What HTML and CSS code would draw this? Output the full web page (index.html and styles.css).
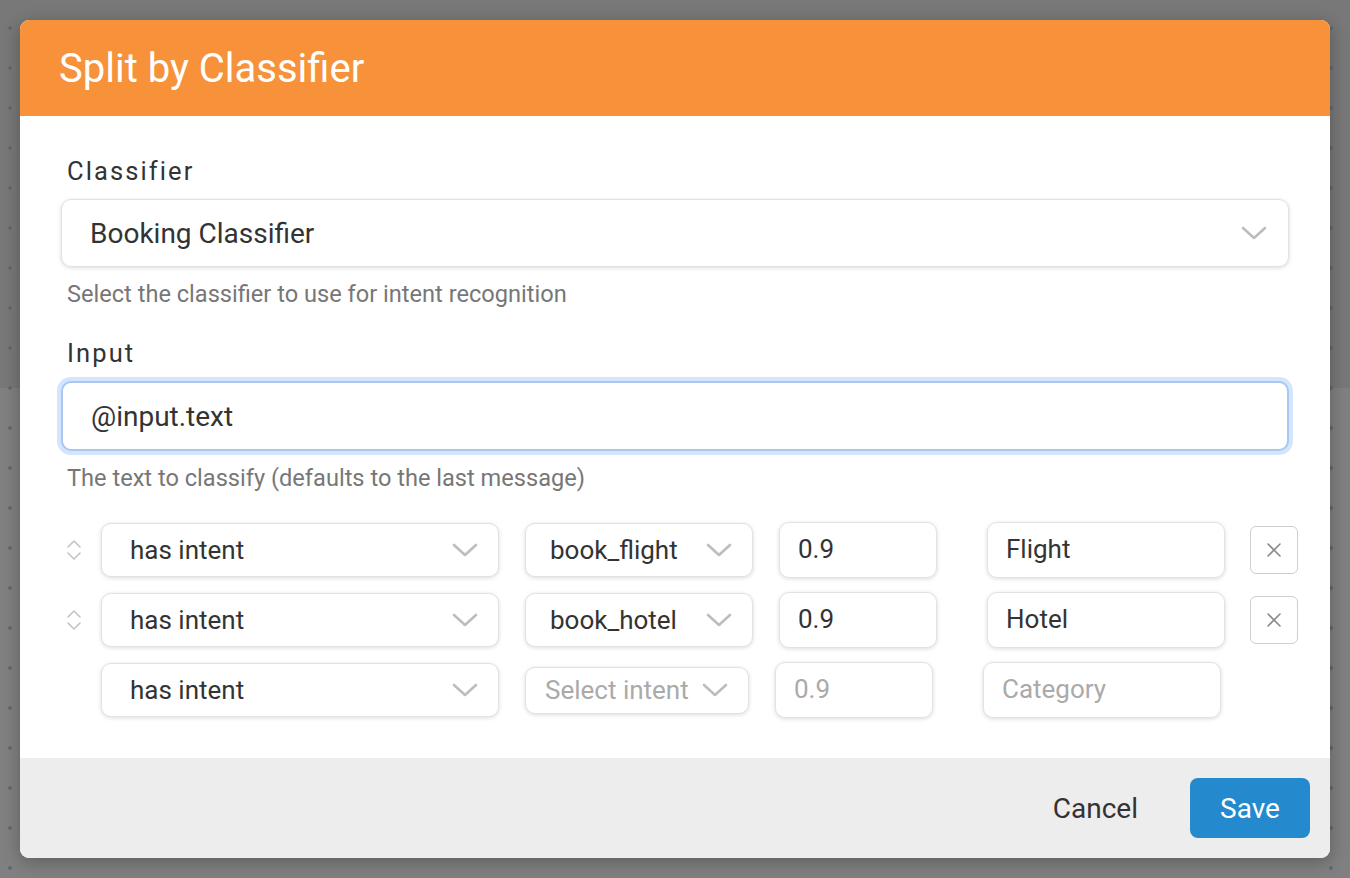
FILE: index.html
```html
<!DOCTYPE html>
<html lang="en">
<head>
<meta charset="utf-8">
<title>Split by Classifier</title>
<link rel="stylesheet" href="styles.css">
</head>
<body>
<div class="dialog">
  <div class="dialog-header">Split by Classifier</div>
  <div class="dialog-body">
    <div class="field">
      <div class="label">Classifier</div>
      <div class="select big">
        <span class="value">Booking Classifier</span>
        <svg class="chev" width="26" height="14" viewBox="0 0 26 14"><path d="M2 2 L13 12 L24 2" fill="none" stroke="#bdbdbd" stroke-width="2.6" stroke-linecap="round" stroke-linejoin="round"/></svg>
      </div>
      <div class="help">Select the classifier to use for intent recognition</div>
    </div>
    <div class="field">
      <div class="label">Input</div>
      <div class="input big focused"><span class="value">@input.text</span></div>
      <div class="help">The text to classify (defaults to the last message)</div>
    </div>

    <div class="rules">
      <div class="rule">
        <div class="handle"><svg width="16" height="22" viewBox="0 0 16 22"><path d="M2 8 L8 2 L14 8 M2 14 L8 20 L14 14" fill="none" stroke="#c4c4c4" stroke-width="1.6" stroke-linecap="round" stroke-linejoin="round"/></svg></div>
        <div class="select op"><span class="value">has intent</span><svg class="chev" width="26" height="14" viewBox="0 0 26 14"><path d="M2 2 L13 12 L24 2" fill="none" stroke="#bdbdbd" stroke-width="2.6" stroke-linecap="round" stroke-linejoin="round"/></svg></div>
        <div class="select intent"><span class="value">book_flight</span><svg class="chev" width="26" height="14" viewBox="0 0 26 14"><path d="M2 2 L13 12 L24 2" fill="none" stroke="#bdbdbd" stroke-width="2.6" stroke-linecap="round" stroke-linejoin="round"/></svg></div>
        <div class="input thr"><span class="value">0.9</span></div>
        <div class="input cat"><span class="value">Flight</span></div>
        <div class="remove"><svg width="16" height="16" viewBox="0 0 16 16"><path d="M2 2 L14 14 M14 2 L2 14" stroke="#8a8a8a" stroke-width="1.6" stroke-linecap="round"/></svg></div>
      </div>
      <div class="rule">
        <div class="handle"><svg width="16" height="22" viewBox="0 0 16 22"><path d="M2 8 L8 2 L14 8 M2 14 L8 20 L14 14" fill="none" stroke="#c4c4c4" stroke-width="1.6" stroke-linecap="round" stroke-linejoin="round"/></svg></div>
        <div class="select op"><span class="value">has intent</span><svg class="chev" width="26" height="14" viewBox="0 0 26 14"><path d="M2 2 L13 12 L24 2" fill="none" stroke="#bdbdbd" stroke-width="2.6" stroke-linecap="round" stroke-linejoin="round"/></svg></div>
        <div class="select intent"><span class="value">book_hotel</span><svg class="chev" width="26" height="14" viewBox="0 0 26 14"><path d="M2 2 L13 12 L24 2" fill="none" stroke="#bdbdbd" stroke-width="2.6" stroke-linecap="round" stroke-linejoin="round"/></svg></div>
        <div class="input thr"><span class="value">0.9</span></div>
        <div class="input cat"><span class="value">Hotel</span></div>
        <div class="remove"><svg width="16" height="16" viewBox="0 0 16 16"><path d="M2 2 L14 14 M14 2 L2 14" stroke="#8a8a8a" stroke-width="1.6" stroke-linecap="round"/></svg></div>
      </div>
      <div class="rule new">
        <div class="handle"></div>
        <div class="select op"><span class="value">has intent</span><svg class="chev" width="26" height="14" viewBox="0 0 26 14"><path d="M2 2 L13 12 L24 2" fill="none" stroke="#bdbdbd" stroke-width="2.6" stroke-linecap="round" stroke-linejoin="round"/></svg></div>
        <div class="select intent small"><span class="value placeholder">Select intent</span><svg class="chev" width="26" height="14" viewBox="0 0 26 14"><path d="M2 2 L13 12 L24 2" fill="none" stroke="#bdbdbd" stroke-width="2.6" stroke-linecap="round" stroke-linejoin="round"/></svg></div>
        <div class="input thr"><span class="value placeholder">0.9</span></div>
        <div class="input cat"><span class="value placeholder">Category</span></div>
      </div>
    </div>
  </div>
  <div class="dialog-footer">
    <button class="btn cancel">Cancel</button>
    <button class="btn save">Save</button>
  </div>
</div>
</body>
</html>
```

FILE: styles.css
```css
html, body {
  margin: 0;
  padding: 0;
}
body {
  width: 1350px;
  height: 878px;
  overflow: hidden;
  font-family: Roboto, "Liberation Sans", Arial, sans-serif;
  background-color: #808080;
  background-image:
    radial-gradient(circle at 10px 28px, #5d6b79 1.6px, transparent 2.2px),
    radial-gradient(circle at 1331px 28px, #5d6b79 1.6px, transparent 2.2px),
    linear-gradient(#787878, #787878);
  background-size: 1350px 40px, 1350px 40px, 1350px 388px;
  background-repeat: repeat-y, repeat-y, no-repeat;
  background-position: 0 0, 0 0, 0 0;
  padding: 20px;
  box-sizing: border-box;
}
.dialog {
  width: 1310px;
  height: 838px;
  background: #fff;
  border-radius: 9px;
  overflow: hidden;
  display: flex;
  flex-direction: column;
  box-shadow: 0 4px 18px rgba(0, 0, 0, 0.28);
}
.dialog-header {
  height: 96px;
  flex: none;
  background: #f7923a;
  color: #fff;
  font-size: 40px;
  display: flex;
  align-items: center;
  padding-left: 39px;
  padding-top: 0;
  box-sizing: border-box;
}
.dialog-body {
  flex: 1;
  padding: 41px 41px 0 41px;
}
.field {
  display: flex;
  flex-direction: column;
  margin-bottom: 33px;
}
.label {
  font-size: 25.5px;
  line-height: 28px;
  letter-spacing: 2.1px;
  color: #333;
  padding-left: 6px;
  margin-bottom: 14px;
}
.help {
  font-size: 23.6px;
  line-height: 24px;
  color: #777;
  padding-left: 6px;
  margin-top: 15px;
}
.select, .input {
  background: #fff;
  border: 1.5px solid #e2e2e2;
  border-radius: 10px;
  box-shadow: 0 1px 4px rgba(0, 0, 0, 0.14);
  box-sizing: border-box;
  display: flex;
  align-items: center;
  font-size: 26px;
  color: #333;
}
.value.placeholder {
  color: #aaa;
}
.big {
  height: 68px;
  padding-left: 28px;
  font-size: 28px;
}
.select {
  justify-content: space-between;
  padding-right: 20px;
}
.select.big .chev {
  margin-right: 1px;
}
.input.focused {
  height: 70px;
  border: 2px solid #a6c8f2;
  box-shadow: 0 0 0 4px #d5e5fb;
}
.rules {
  display: flex;
  flex-direction: column;
  gap: 14px;
  margin-top: -1px;
}
.rule {
  display: flex;
  align-items: center;
  height: 56px;
}
.handle {
  width: 40px;
  flex: none;
  display: flex;
  justify-content: flex-start;
  padding-left: 5px;
  box-sizing: border-box;
}
.op {
  width: 398px;
  height: 54px;
  padding-left: 28px;
  flex: none;
}
.intent {
  width: 228px;
  height: 54px;
  margin-left: 26px;
  padding-left: 24px;
  flex: none;
}
.intent.small {
  width: 224px;
  height: 47px;
  padding-left: 19px;
  padding-right: 20px;
}
.thr {
  width: 158px;
  height: 56px;
  margin-left: 26px;
  padding-left: 18px;
  padding-bottom: 2px;
  flex: none;
}
.cat {
  width: 238px;
  height: 56px;
  margin-left: 50px;
  padding-left: 18px;
  padding-bottom: 2px;
  flex: none;
}
.remove {
  width: 48px;
  height: 48px;
  margin-left: 25px;
  border: 1.5px solid #cfcfcf;
  border-radius: 6px;
  box-sizing: border-box;
  display: flex;
  align-items: center;
  justify-content: center;
  flex: none;
}
.dialog-footer {
  height: 100px;
  flex: none;
  background: #ededed;
  display: flex;
  align-items: center;
  justify-content: flex-end;
  padding-right: 20px;
  gap: 26px;
}
.btn {
  font-family: Roboto, "Liberation Sans", Arial, sans-serif;
  font-size: 28px;
  height: 60px;
  border: none;
  border-radius: 8px;
  cursor: pointer;
}
.cancel {
  background: transparent;
  color: #333;
  padding: 0 26px;
}
.save {
  background: #2589cd;
  color: #fff;
  width: 120px;
}
```
